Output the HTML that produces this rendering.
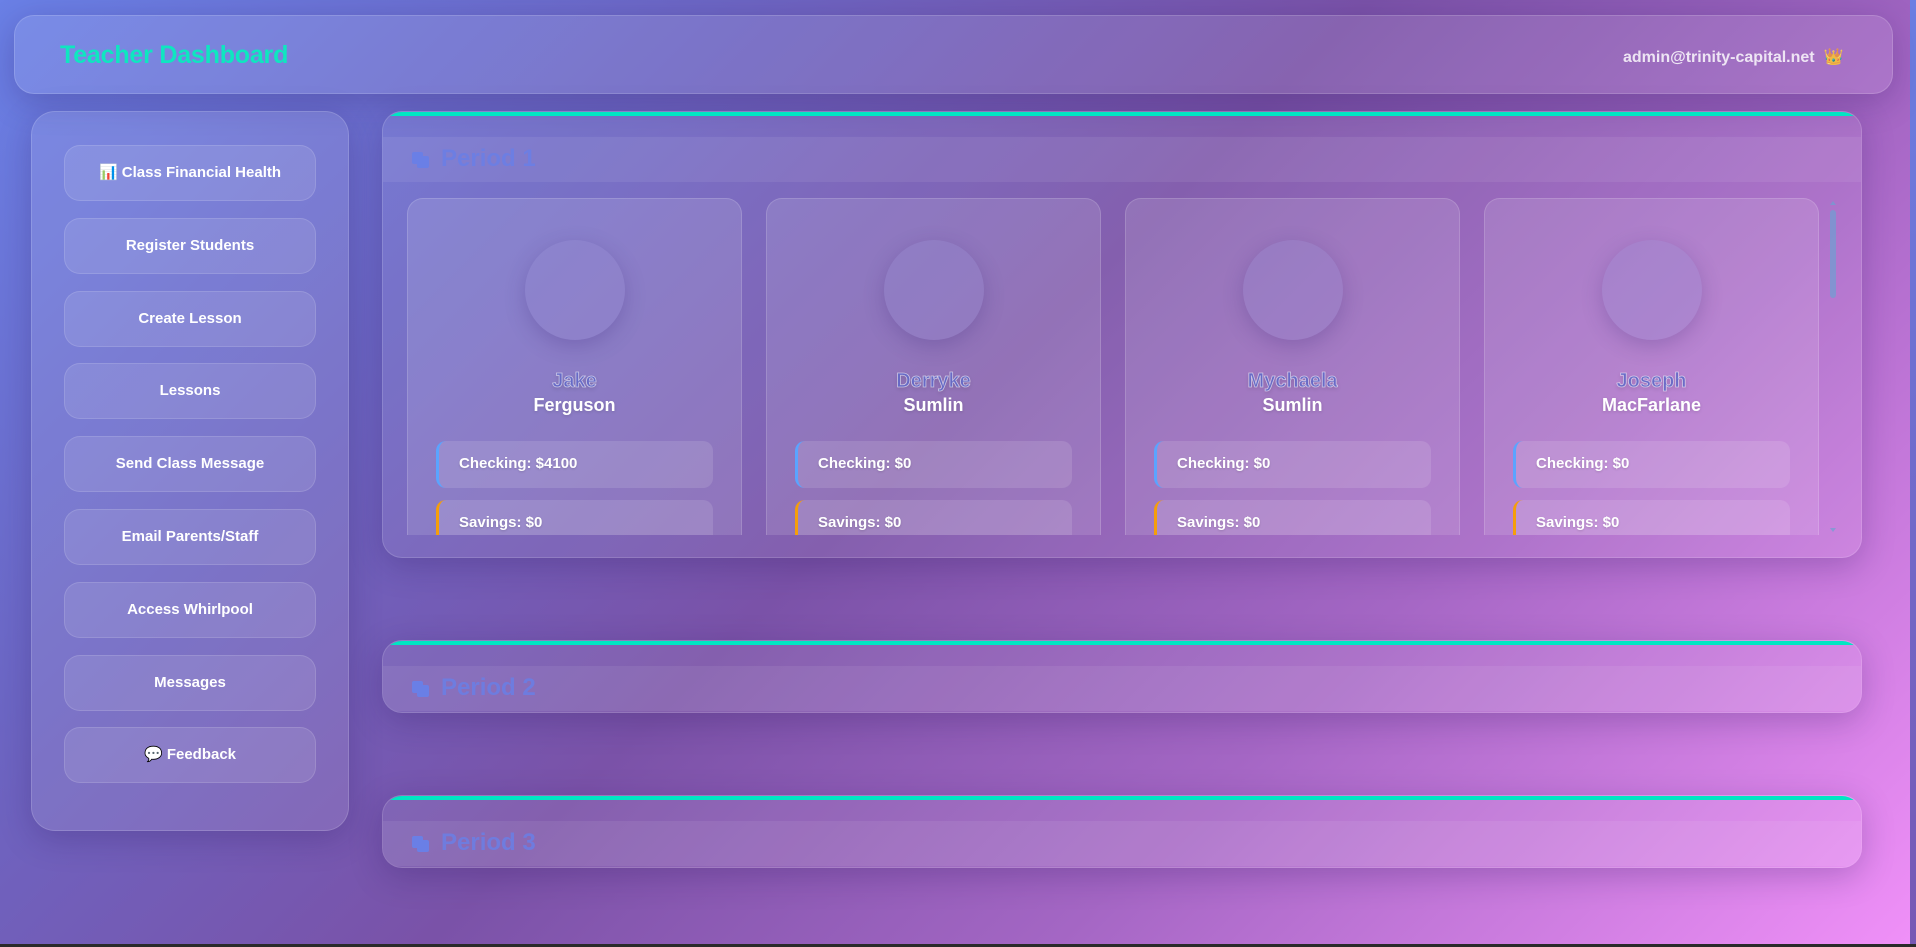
<!DOCTYPE html>
<html><head><meta charset="utf-8">
<style>
*{box-sizing:border-box;margin:0;padding:0}
html,body{width:1916px;height:947px;overflow:hidden}
body{font-family:"Liberation Sans","DejaVu Sans",sans-serif;background:#2a2a2a;position:relative}
#bg{position:absolute;left:0;top:0;width:1910px;height:944px;background:linear-gradient(135deg,#6a80e6 0%,#6c66c4 25%,#7a52a8 48%,#a466c4 70%,#f090f8 100%)}
#strip{position:absolute;left:1910px;top:0;width:6px;height:944px;background:linear-gradient(#6b7fe3,#7658b4)}
.glass{position:absolute;background:rgba(255,255,255,0.1);border:1px solid rgba(255,255,255,0.15);box-shadow:0 8px 32px rgba(40,20,90,0.25)}
#hdr{left:14px;top:15px;width:1879px;height:79px;border-radius:20px}
#title{position:absolute;left:45px;top:25px;font-size:25px;font-weight:bold;color:#0fe6c0;letter-spacing:-0.2px}
#email{position:absolute;left:1608px;top:31px;font-size:16px;font-weight:bold;color:rgba(255,255,255,0.82)}
#side{left:31px;top:111px;width:318px;height:720px;border-radius:24px}
.btn{position:absolute;left:32px;width:252px;height:56px;border-radius:16px;background:rgba(255,255,255,0.1);border:1px solid rgba(255,255,255,0.13);color:#fff;font-size:15px;font-weight:bold;text-align:center;line-height:54px}
.panel{position:absolute;left:382px;width:1480px;border-radius:20px;background:rgba(255,255,255,0.08);border:1px solid rgba(255,255,255,0.14);box-shadow:0 8px 32px rgba(40,20,90,0.25);overflow:hidden}
.panel .bar{position:absolute;left:0;top:0;right:0;height:4px;background:#00e6c3}
.panel .band{position:absolute;left:0;right:0;top:25px;height:45px;background:rgba(255,255,255,0.07)}
.ptitle{position:absolute;left:58px;top:8px;font-size:24px;font-weight:bold;color:#6a7fe6;opacity:.85}
.picon{position:absolute;left:28px;top:13px}
.card{position:absolute;top:86px;width:335px;height:360px;border-radius:16px;background:rgba(255,255,255,0.12);border:1px solid rgba(255,255,255,0.15)}
.av{position:absolute;left:117px;top:41px;width:100px;height:100px;border-radius:50%;background:rgba(150,140,210,0.3);box-shadow:0 6px 20px rgba(60,40,120,0.25)}
.fn{position:absolute;left:0;right:0;top:171px;text-align:center;font-size:20px;font-weight:bold;color:rgba(100,105,200,0.9);-webkit-text-stroke:0.8px rgba(255,255,255,0.6);text-shadow:0 2px 4px rgba(0,0,0,0.15)}
.ln{position:absolute;left:0;right:0;top:196px;text-align:center;font-size:18px;font-weight:bold;color:#fff;text-shadow:0 1px 3px rgba(0,0,0,0.15)}
.acc{position:absolute;left:28px;width:277px;height:47px;border-radius:10px;background:rgba(255,255,255,0.12);color:#fff;font-size:15px;font-weight:bold;line-height:46px;padding-left:20px;text-shadow:0 1px 2px rgba(0,0,0,0.15)}
.chk{top:242px;border-left:3px solid #5aa4ff}
.sav{top:301px;border-left:3px solid #f59e0b}
</style></head><body>
<div id="bg"></div><div id="strip"></div>

<div class="glass" id="hdr">
<div id="title">Teacher Dashboard</div>
<div id="email">admin@trinity-capital.net&nbsp; 👑</div>
</div>

<div class="glass" id="side">
<div class="btn" style="top:33px">📊 Class Financial Health</div>
<div class="btn" style="top:106px">Register Students</div>
<div class="btn" style="top:179px">Create Lesson</div>
<div class="btn" style="top:251px">Lessons</div>
<div class="btn" style="top:324px">Send Class Message</div>
<div class="btn" style="top:397px">Email Parents/Staff</div>
<div class="btn" style="top:470px">Access Whirlpool</div>
<div class="btn" style="top:543px">Messages</div>
<div class="btn" style="top:615px">💬 Feedback</div>
</div>

<div class="panel" style="top:111px;height:447px">
<div class="bar"></div>
<div class="band"><svg class="picon" width="20" height="20" viewBox="0 0 20 20"><rect x="1" y="2" width="11" height="12" rx="2" fill="#6a7fe6"/><rect x="6" y="6" width="12" height="12" rx="2" fill="#6a7fe6"/></svg><div class="ptitle">Period 1</div></div>
<div style="position:absolute;left:24px;top:0;width:1432px;height:423px;overflow:hidden">
<div class="card" style="left:0">
<div class="av"></div><div class="fn">Jake</div><div class="ln">Ferguson</div>
<div class="acc chk">Checking: $4100</div><div class="acc sav">Savings: $0</div></div>
<div class="card" style="left:359px">
<div class="av"></div><div class="fn">Derryke</div><div class="ln">Sumlin</div>
<div class="acc chk">Checking: $0</div><div class="acc sav">Savings: $0</div></div>
<div class="card" style="left:718px">
<div class="av"></div><div class="fn">Mychaela</div><div class="ln">Sumlin</div>
<div class="acc chk">Checking: $0</div><div class="acc sav">Savings: $0</div></div>
<div class="card" style="left:1077px">
<div class="av"></div><div class="fn">Joseph</div><div class="ln">MacFarlane</div>
<div class="acc chk">Checking: $0</div><div class="acc sav">Savings: $0</div></div>
</div>
<div style="position:absolute;left:1447px;top:98px;width:6px;height:88px;border-radius:3px;background:rgba(110,160,210,0.7)"></div>
<div style="position:absolute;left:1447px;top:89px;width:0;height:0;border-left:3px solid transparent;border-right:3px solid transparent;border-bottom:4px solid rgba(110,160,210,0.7)"></div>
<div style="position:absolute;left:1447px;top:416px;width:0;height:0;border-left:3px solid transparent;border-right:3px solid transparent;border-top:4px solid rgba(110,160,210,0.7)"></div>
</div>

<div class="panel" style="top:640px;height:73px">
<div class="bar"></div>
<div class="band"><svg class="picon" width="20" height="20" viewBox="0 0 20 20"><rect x="1" y="2" width="11" height="12" rx="2" fill="#6a7fe6"/><rect x="6" y="6" width="12" height="12" rx="2" fill="#6a7fe6"/></svg><div class="ptitle">Period 2</div></div>
</div>

<div class="panel" style="top:795px;height:73px">
<div class="bar"></div>
<div class="band"><svg class="picon" width="20" height="20" viewBox="0 0 20 20"><rect x="1" y="2" width="11" height="12" rx="2" fill="#6a7fe6"/><rect x="6" y="6" width="12" height="12" rx="2" fill="#6a7fe6"/></svg><div class="ptitle">Period 3</div></div>
</div>
</body></html>
